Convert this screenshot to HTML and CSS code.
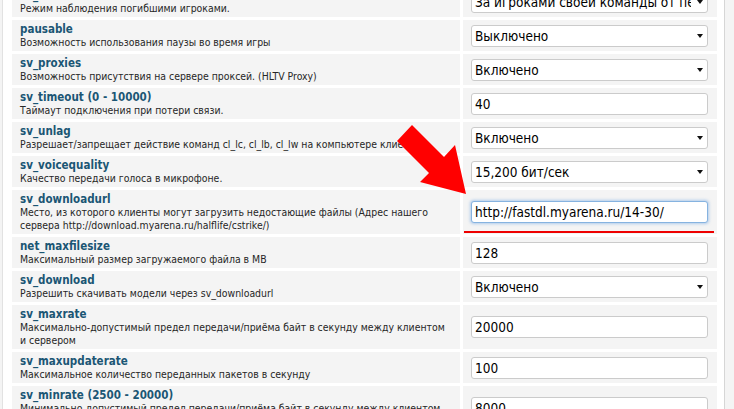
FILE: index.html
```html
<!DOCTYPE html>
<html lang="ru">
<head>
<meta charset="utf-8">
<title>Настройки сервера</title>
<link rel="stylesheet" href="styles.css">
</head>
<body>
<div class="frame">
  <div class="settings">
    <div class="cell name"><div class="title">sv_forcecamera</div><div class="desc">Режим наблюдения погибшими игроками.</div></div>
    <div class="cell value"><div class="control select"><span class="text">За игроками своей команды от первого лица</span><span class="caret"></span></div></div>

    <div class="cell name"><div class="title">pausable</div><div class="desc">Возможность использования паузы во время игры</div></div>
    <div class="cell value"><div class="control select"><span class="text">Выключено</span><span class="caret"></span></div></div>

    <div class="cell name"><div class="title">sv_proxies</div><div class="desc">Возможность присутствия на сервере проксей. (HLTV Proxy)</div></div>
    <div class="cell value"><div class="control select"><span class="text">Включено</span><span class="caret"></span></div></div>

    <div class="cell name"><div class="title">sv_timeout (0 - 10000)</div><div class="desc">Таймаут подключения при потери связи.</div></div>
    <div class="cell value"><div class="control input"><span class="text">40</span></div></div>

    <div class="cell name"><div class="title">sv_unlag</div><div class="desc nowrap">Разрешает/запрещает действие команд cl_lc, cl_lb, cl_lw на компьютере клиента.</div></div>
    <div class="cell value"><div class="control select"><span class="text">Включено</span><span class="caret"></span></div></div>

    <div class="cell name"><div class="title">sv_voicequality</div><div class="desc">Качество передачи голоса в микрофоне.</div></div>
    <div class="cell value"><div class="control select"><span class="text">15,200 бит/сек</span><span class="caret"></span></div></div>

    <div class="cell name"><div class="title">sv_downloadurl</div><div class="desc">Место, из которого клиенты могут загрузить недостающие файлы (Адрес нашего<br>сервера http://download.myarena.ru/halflife/cstrike/)</div></div>
    <div class="cell value marked"><div class="control input focused"><span class="text">http://fastdl.myarena.ru/14-30/</span></div><span class="underline"></span></div>

    <div class="cell name"><div class="title">net_maxfilesize</div><div class="desc">Максимальный размер загружаемого файла в MB</div></div>
    <div class="cell value"><div class="control input"><span class="text">128</span></div></div>

    <div class="cell name"><div class="title">sv_download</div><div class="desc">Разрешить скачивать модели через sv_downloadurl</div></div>
    <div class="cell value"><div class="control select"><span class="text">Включено</span><span class="caret"></span></div></div>

    <div class="cell name"><div class="title">sv_maxrate</div><div class="desc">Максимально-допустимый предел передачи/приёма байт в секунду между клиентом<br>и сервером</div></div>
    <div class="cell value"><div class="control input"><span class="text">20000</span></div></div>

    <div class="cell name"><div class="title">sv_maxupdaterate</div><div class="desc">Максимальное количество переданных пакетов в секунду</div></div>
    <div class="cell value"><div class="control input"><span class="text">100</span></div></div>

    <div class="cell name"><div class="title">sv_minrate (2500 - 20000)</div><div class="desc">Минимально-допустимый предел передачи/приёма байт в секунду между клиентом<br>и сервером</div></div>
    <div class="cell value"><div class="control input"><span class="text">8000</span></div></div>
  </div>
</div>
<svg class="arrow" width="734" height="409" viewBox="0 0 734 409" aria-hidden="true">
  <polygon points="412,125 444,157 455,145 466,194 420,182 429,173 397,141" fill="#ff0000"/>
</svg>
</body>
</html>
```

FILE: styles.css
```css
html, body {
  margin: 0;
  padding: 0;
  height: 100%;
}

body {
  position: relative;
  overflow: hidden;
  background: #f4f4f4;
  font-family: "DejaVu Sans Condensed", "DejaVu Sans", sans-serif;
  font-stretch: condensed;
}

.frame {
  margin-left: 2px;
  width: 705px;
  min-height: 100%;
  padding: 0 7px 0 9px;
  background: #ffffff;
  border-left: 1px solid #e2e2e2;
  border-right: 1px solid #d6d6d6;
}

.settings {
  display: grid;
  grid-template-columns: 448px 254px;
  column-gap: 3px;
  row-gap: 3px;
  margin-top: -14px;
}

.cell {
  background: #f4f4f4;
}

.name {
  padding: 2px 8px;
  min-width: 0;
}

.title {
  font-size: 11.5px;
  font-weight: bold;
  line-height: 14px;
  color: #1b5674;
}

.desc {
  font-size: 10.4px;
  line-height: 13px;
  color: #262626;
  white-space: nowrap;
}

.nowrap {
  overflow: hidden;
}

.value {
  display: flex;
  align-items: center;
  padding: 0 9px 0 8px;
  position: relative;
}

.control {
  flex: 1;
  min-width: 0;
  height: 22px;
  box-sizing: border-box;
  display: flex;
  align-items: center;
  background: #ffffff;
  border: 1px solid #cbcbcb;
  border-radius: 3px;
  padding: 0 4px 0 3px;
  font-size: 13.5px;
  color: #000000;
}

.control .text {
  flex: 1;
  min-width: 0;
  white-space: nowrap;
  overflow: hidden;
}

.caret {
  flex: none;
  width: 0;
  height: 0;
  margin-left: 6px;
  border-left: 3.5px solid transparent;
  border-right: 3.5px solid transparent;
  border-top: 4px solid #111111;
}

.focused {
  border-color: #86b3e0;
  box-shadow: 0 0 3px 1px rgba(120, 170, 225, 0.55);
}

.underline {
  position: absolute;
  left: 1px;
  right: 3px;
  bottom: 1px;
  height: 2px;
  background: #ee0000;
}

.arrow {
  position: absolute;
  top: 0;
  left: 0;
  pointer-events: none;
}
```
